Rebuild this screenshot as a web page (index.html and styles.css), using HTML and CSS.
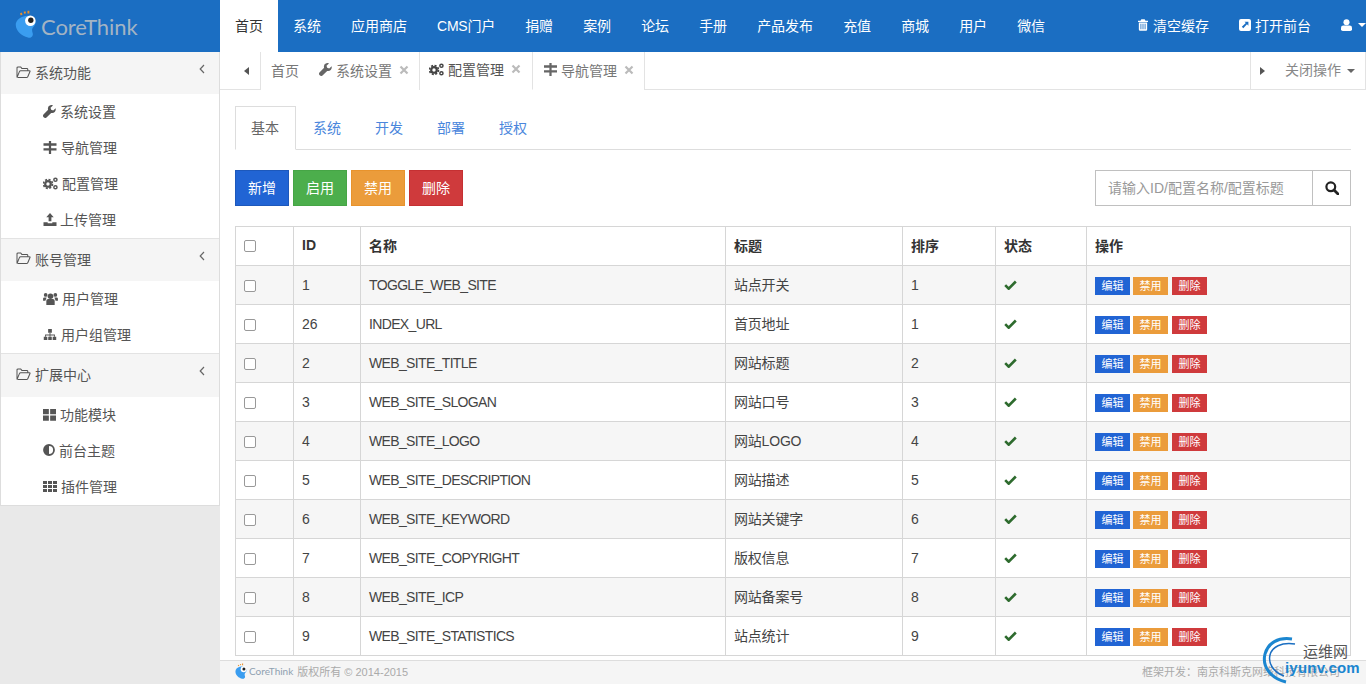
FILE: index.html
```html
<!DOCTYPE html>
<html lang="zh">
<head>
<meta charset="utf-8">
<title>CoreThink</title>
<link rel="stylesheet" href="styles.css">
</head>
<body>
<svg class="sprite" xmlns="http://www.w3.org/2000/svg">
  <symbol id="i-folder" viewBox="0 0 16 14"><path d="M1 12.5V2.2Q1 1 2.2 1H5l1.2 1.6h5.4q1 0 1 1V5M1 12.5 3.6 6q.4-1 1.400-1h9q1.400 0 1 1l-2.400 5.600q-.4.9-1.400.9H1.800" fill="none" stroke="currentColor" stroke-width="1.100"/></symbol>
  <symbol id="i-wrench" viewBox="0 0 14 14"><path d="M13.600 3.400 11 5.900 8.800 5.200 8.100 3 10.700.5C8.700-.5 6.200.6 5.500 2.600c-.3.900-.3 1.800 0 2.600L.5 10.200c-.7.700-.7 1.900 0 2.700l.6.600c.8.700 2 .7 2.700 0l5-5c2.700.9 5.700-1.400 4.800-5.100z" fill="currentColor"/></symbol>
  <symbol id="i-signs" viewBox="0 0 14 14"><path d="M5.800 0h2.400v14H5.800zM0 2.500h14V5H0zM0 7.800h14v2.400H0z" fill="currentColor"/></symbol>
  <symbol id="i-cogs" viewBox="0 0 16 14"><g fill="none" stroke="currentColor"><circle cx="5.300" cy="7.500" r="3" stroke-width="2.400"/><circle cx="5.300" cy="7.500" r="4.800" stroke-width="1.800" stroke-dasharray="2.200 1.570"/><circle cx="13.300" cy="3" r="1.700" stroke-width="1.600"/><circle cx="13.300" cy="11" r="1.700" stroke-width="1.600"/></g></symbol>
  <symbol id="i-upload" viewBox="0 0 14 14"><path d="M7 0l4 4.500H8.500V9h-3V4.500H3zM0 10h4.500v1h5v-1H14v4H0z" fill="currentColor"/></symbol>
  <symbol id="i-users" viewBox="0 0 16 14"><g fill="currentColor"><circle cx="8" cy="4.500" r="3"/><circle cx="2.800" cy="3.200" r="2"/><circle cx="13.200" cy="3.200" r="2"/><path d="M3.500 14V9.500Q3.500 7.500 5.500 7.500h5q2 0 2 2V14zM0 9.500V7q0-1.200 1.500-1.200h2.300L2.500 9.500zM16 9.500V7q0-1.200-1.500-1.200h-2.300l1.300 3.700z"/></g></symbol>
  <symbol id="i-sitemap" viewBox="0 0 14 14"><g fill="currentColor"><path d="M5 1h4v4H5zM.3 9.500h3.800V13H.3zM5.100 9.500h3.800V13H5.100zM9.900 9.500h3.800V13H9.900z"/><path d="M6.500 5h1v2h4.800v2.500h-1V8H7.500v1.500h-1V8H2.700v1.500h-1V7h4.800z"/></g></symbol>
  <symbol id="i-large" viewBox="0 0 14 14"><path d="M0 1h6.300v5.600H0zM7.700 1H14v5.600H7.700zM0 8h6.300v5.600H0zM7.700 8H14v5.600H7.700z" fill="currentColor"/></symbol>
  <symbol id="i-adjust" viewBox="0 0 12 12"><circle cx="6" cy="6" r="5" fill="none" stroke="currentColor" stroke-width="1.800"/><path d="M6 1a5 5 0 0 0 0 10z" fill="currentColor"/></symbol>
  <symbol id="i-th" viewBox="0 0 14 12"><path d="M0 .5h4v3H0zM5 .5h4v3H5zM10 .5h4v3h-4zM0 4.500h4v3H0zM5 4.500h4v3H5zM10 4.500h4v3h-4zM0 8.500h4v3H0zM5 8.500h4v3H5zM10 8.500h4v3h-4z" fill="currentColor"/></symbol>
  <symbol id="i-trash" viewBox="0 0 12 14"><path d="M4 0h4l1 2h3v1.300H0V2h3zM1 4h10v8.500Q11 14 9.500 14h-7Q1 14 1 12.500zm2 1.500v6.500h1V5.500zm2.500 0v6.500h1V5.500zm2.500 0v6.500h1V5.500z" fill="currentColor" fill-rule="evenodd"/></symbol>
  <symbol id="i-ext" viewBox="0 0 12 12"><path d="M2 0h8q2 0 2 2v8q0 2-2 2H2q-2 0-2-2V2q0-2 2-2zM5.500 2.800H9.400V6.700L8 5.300 4.300 9.200 2.800 7.700 6.800 4z" fill="currentColor" fill-rule="evenodd"/></symbol>
  <symbol id="i-user" viewBox="0 0 12 13"><circle cx="6" cy="3.500" r="3.300" fill="currentColor"/><path d="M0 11V9.500Q0 7 2.500 7h7Q12 7 12 9.500V11q0 2-2 2H2q-2 0-2-2z" fill="currentColor"/></symbol>
  <symbol id="i-search" viewBox="0 0 14 14"><circle cx="5.800" cy="5.800" r="4.400" fill="none" stroke="currentColor" stroke-width="2.200"/><path d="M9 9l4 4" stroke="currentColor" stroke-width="2.800" stroke-linecap="round"/></symbol>
  <symbol id="i-check" viewBox="0 0 13 10"><path d="M1.200 5.200 4.700 8.700 11.800 1.500" fill="none" stroke="currentColor" stroke-width="2.600"/></symbol>
  <symbol id="i-x" viewBox="0 0 10 10"><path d="M1.500 1.500l7 7M8.500 1.500l-7 7" stroke="currentColor" stroke-width="2.200"/></symbol>
  <symbol id="i-chev" viewBox="0 0 6 10"><path d="M5 1 1.200 5 5 9" fill="none" stroke="currentColor" stroke-width="1.200"/></symbol>
  <symbol id="i-mascot" viewBox="0 0 24 32"><path d="M9 6.500c5-2 10 0 12 4 1 2.500 0 5-1.500 6.500-2 2-2 4-1 7 .8 3-2 5.500-5 4.500C7 27 1 22 .8 15.500.7 11 4 8 9 6.500z" fill="#3a9df0"/><circle cx="16" cy="11" r="5.500" fill="#fff"/><circle cx="16.500" cy="10.500" r="2.800" fill="#222"/><path d="M7 5 6 3M10.500 3.500 10 1.500M14 3.500V0.500" stroke="#e8912d" stroke-width="2"/></symbol>
</svg>

<div class="app">
  <header class="topbar">
    <a class="brand">
      <svg class="mascot"><use href="#i-mascot"/></svg>
      <span class="brand-name">CoreThink</span>
    </a>
    <nav class="topnav">
      <a class="nav-item is-active">首页</a>
      <a class="nav-item">系统</a>
      <a class="nav-item">应用商店</a>
      <a class="nav-item nav-cms">CMS门户</a>
      <a class="nav-item">捐赠</a>
      <a class="nav-item">案例</a>
      <a class="nav-item">论坛</a>
      <a class="nav-item">手册</a>
      <a class="nav-item">产品发布</a>
      <a class="nav-item">充值</a>
      <a class="nav-item">商城</a>
      <a class="nav-item">用户</a>
      <a class="nav-item">微信</a>
    </nav>
    <div class="topright">
      <a class="top-link"><svg class="ic ic-trash"><use href="#i-trash"/></svg>清空缓存</a>
      <a class="top-link"><svg class="ic ic-ext"><use href="#i-ext"/></svg>打开前台</a>
      <a class="top-user"><svg class="ic ic-top-user"><use href="#i-user"/></svg><span class="caret caret-white"></span></a>
    </div>
  </header>

  <div class="body">
    <aside class="side">
      <div class="side-panel">
        <div class="side-head"><svg class="ic ic-folder"><use href="#i-folder"/></svg><span class="side-title">系统功能</span><svg class="ic-chev"><use href="#i-chev"/></svg></div>
        <a class="side-item"><svg class="ic si"><use href="#i-wrench"/></svg>系统设置</a>
        <a class="side-item"><svg class="ic si si-14"><use href="#i-signs"/></svg>导航管理</a>
        <a class="side-item"><svg class="ic si si-w"><use href="#i-cogs"/></svg>配置管理</a>
        <a class="side-item"><svg class="ic si si-up"><use href="#i-upload"/></svg>上传管理</a>
        <div class="side-head side-head-next"><svg class="ic ic-folder"><use href="#i-folder"/></svg><span class="side-title">账号管理</span><svg class="ic-chev"><use href="#i-chev"/></svg></div>
        <a class="side-item"><svg class="ic si si-w"><use href="#i-users"/></svg>用户管理</a>
        <a class="side-item"><svg class="ic si si-14"><use href="#i-sitemap"/></svg>用户组管理</a>
        <div class="side-head side-head-next side-head-last"><svg class="ic ic-folder"><use href="#i-folder"/></svg><span class="side-title">扩展中心</span><svg class="ic-chev"><use href="#i-chev"/></svg></div>
        <a class="side-item"><svg class="ic si"><use href="#i-large"/></svg>功能模块</a>
        <a class="side-item"><svg class="ic si si-n"><use href="#i-adjust"/></svg>前台主题</a>
        <a class="side-item"><svg class="ic si si-14"><use href="#i-th"/></svg>插件管理</a>
      </div>
    </aside>

    <main class="main">
      <div class="tabstrip">
        <div class="strip-arrow"><span class="tri tri-left"></span></div>
        <div class="strip-tab strip-home">首页</div>
        <div class="strip-tab strip-first"><svg class="ic st-ic"><use href="#i-wrench"/></svg>系统设置<svg class="st-x"><use href="#i-x"/></svg></div>
        <div class="strip-tab is-current"><svg class="ic st-ic st-ic-w"><use href="#i-cogs"/></svg>配置管理<svg class="st-x"><use href="#i-x"/></svg></div>
        <div class="strip-tab strip-third"><svg class="ic st-ic"><use href="#i-signs"/></svg>导航管理<svg class="st-x"><use href="#i-x"/></svg></div>
        <div class="strip-right"><span class="tri tri-right"></span><span class="close-ops">关闭操作</span><span class="caret caret-grey"></span></div>
      </div>

      <div class="content">
        <ul class="tabs">
          <li class="tab is-on">基本</li>
          <li class="tab">系统</li>
          <li class="tab">开发</li>
          <li class="tab">部署</li>
          <li class="tab">授权</li>
        </ul>

        <div class="toolbar">
          <div class="btns">
            <button class="btn btn-blue">新增</button>
            <button class="btn btn-green">启用</button>
            <button class="btn btn-orange">禁用</button>
            <button class="btn btn-red">删除</button>
          </div>
          <div class="search">
            <span class="search-input">请输入ID/配置名称/配置标题</span>
            <span class="search-btn"><svg class="ic-search"><use href="#i-search"/></svg></span>
          </div>
        </div>

        <table class="grid">
          <thead>
            <tr><th class="c-check"><span class="cb"></span></th><th class="c-id">ID</th><th class="c-name">名称</th><th class="c-title">标题</th><th class="c-sort">排序</th><th class="c-state">状态</th><th>操作</th></tr>
          </thead>
          <tbody>
            <tr><td><span class="cb"></span></td><td>1</td><td>TOGGLE_WEB_SITE</td><td>站点开关</td><td>1</td><td><svg class="ic-check"><use href="#i-check"/></svg></td><td><span class="lb lb-blue">编辑</span><span class="lb lb-orange">禁用</span><span class="lb lb-red">删除</span></td></tr>
            <tr><td><span class="cb"></span></td><td>26</td><td>INDEX_URL</td><td>首页地址</td><td>1</td><td><svg class="ic-check"><use href="#i-check"/></svg></td><td><span class="lb lb-blue">编辑</span><span class="lb lb-orange">禁用</span><span class="lb lb-red">删除</span></td></tr>
            <tr><td><span class="cb"></span></td><td>2</td><td>WEB_SITE_TITLE</td><td>网站标题</td><td>2</td><td><svg class="ic-check"><use href="#i-check"/></svg></td><td><span class="lb lb-blue">编辑</span><span class="lb lb-orange">禁用</span><span class="lb lb-red">删除</span></td></tr>
            <tr><td><span class="cb"></span></td><td>3</td><td>WEB_SITE_SLOGAN</td><td>网站口号</td><td>3</td><td><svg class="ic-check"><use href="#i-check"/></svg></td><td><span class="lb lb-blue">编辑</span><span class="lb lb-orange">禁用</span><span class="lb lb-red">删除</span></td></tr>
            <tr><td><span class="cb"></span></td><td>4</td><td>WEB_SITE_LOGO</td><td>网站LOGO</td><td>4</td><td><svg class="ic-check"><use href="#i-check"/></svg></td><td><span class="lb lb-blue">编辑</span><span class="lb lb-orange">禁用</span><span class="lb lb-red">删除</span></td></tr>
            <tr><td><span class="cb"></span></td><td>5</td><td>WEB_SITE_DESCRIPTION</td><td>网站描述</td><td>5</td><td><svg class="ic-check"><use href="#i-check"/></svg></td><td><span class="lb lb-blue">编辑</span><span class="lb lb-orange">禁用</span><span class="lb lb-red">删除</span></td></tr>
            <tr><td><span class="cb"></span></td><td>6</td><td>WEB_SITE_KEYWORD</td><td>网站关键字</td><td>6</td><td><svg class="ic-check"><use href="#i-check"/></svg></td><td><span class="lb lb-blue">编辑</span><span class="lb lb-orange">禁用</span><span class="lb lb-red">删除</span></td></tr>
            <tr><td><span class="cb"></span></td><td>7</td><td>WEB_SITE_COPYRIGHT</td><td>版权信息</td><td>7</td><td><svg class="ic-check"><use href="#i-check"/></svg></td><td><span class="lb lb-blue">编辑</span><span class="lb lb-orange">禁用</span><span class="lb lb-red">删除</span></td></tr>
            <tr><td><span class="cb"></span></td><td>8</td><td>WEB_SITE_ICP</td><td>网站备案号</td><td>8</td><td><svg class="ic-check"><use href="#i-check"/></svg></td><td><span class="lb lb-blue">编辑</span><span class="lb lb-orange">禁用</span><span class="lb lb-red">删除</span></td></tr>
            <tr><td><span class="cb"></span></td><td>9</td><td>WEB_SITE_STATISTICS</td><td>站点统计</td><td>9</td><td><svg class="ic-check"><use href="#i-check"/></svg></td><td><span class="lb lb-blue">编辑</span><span class="lb lb-orange">禁用</span><span class="lb lb-red">删除</span></td></tr>
          </tbody>
        </table>
      </div>

      <footer class="foot">
        <div class="foot-left"><svg class="foot-mascot"><use href="#i-mascot"/></svg><span class="foot-brand">CoreThink</span><span>版权所有 © 2014-2015</span></div>
        <div class="foot-right">框架开发：南京科斯克网络科技有限公司</div>
      </footer>
    </main>
  </div>
</div>

<div class="watermark">
  <svg class="wm-arc" viewBox="0 0 44 48"><path d="M24 46C8 42 0 30 3 18 6 7 16 1 30 3" fill="none" stroke="#1b86d0" stroke-width="3"/><path d="M22 40C11 36 6 27 8 19 10 11 19 6 33 8" fill="none" stroke="#1b6fc2" stroke-width="1.500"/></svg>
  <span class="wm-cn">运维网</span>
  <span class="wm-en">iyunv.com</span>
</div>
</body>
</html>
```

FILE: styles.css
```css
* { box-sizing: border-box; }
html, body { margin: 0; height: 100%; overflow: hidden; }
body {
  font-family: "Liberation Sans", "Noto Sans CJK SC", sans-serif;
  font-size: 14px;
  color: #444;
  background: #fff;
  position: relative;
}
.sprite { display: none; }
.ic { display: inline-block; flex: none; }

.app { display: flex; flex-direction: column; height: 684px; }

/* top bar */
.topbar { display: flex; height: 52px; flex: none; background: #1b6ec2; color: #fff; }
.brand { width: 220px; flex: none; display: flex; align-items: center; padding-left: 15px; }
.mascot { width: 23px; height: 33px; margin-top: -2px; }
.brand-name { font-family: "Lato", sans-serif; font-size: 22px; color: #a3b4c4; margin-left: 3px; letter-spacing: -.1px; }
.topnav { display: flex; }
.nav-item { height: 52px; line-height: 52px; padding: 0 15px; color: #fff; white-space: nowrap; flex: none; }
.nav-cms { letter-spacing: -.2px; }
.nav-item.is-active { background: #fff; color: #333; }
.topright { margin-left: auto; display: flex; align-items: center; height: 52px; }
.top-link { display: flex; align-items: center; margin-right: 30px; padding-bottom: 2px; white-space: nowrap; }
.ic-trash { width: 10px; height: 12px; margin-right: 5px; color: #fff; }
.ic-ext { width: 12px; height: 12px; margin-right: 4px; color: #fff; }
.top-user { display: flex; align-items: center; width: 25px; padding-bottom: 2px; }
.ic-top-user { width: 11px; height: 12px; margin-right: 6px; color: #fff; }
.caret { display: inline-block; width: 0; height: 0; border-left: 4px solid transparent; border-right: 4px solid transparent; border-top: 4px solid #fff; }
.caret-grey { border-top-color: #666; margin-left: 6px; }

/* body */
.body { display: flex; flex: 1; min-height: 0; }
.side { width: 220px; flex: none; background: #e9e9e9; }
.side-panel { background: #fff; border: 1px solid #ddd; border-top: 0; }
.side-head { height: 42px; background: #f5f5f5; display: flex; align-items: center; padding: 0 0 2px 15px; color: #555; position: relative; }
.side-head-next { height: 43px; border-top: 1px solid #e3e3e3; padding-bottom: 3px; }
.side-head-last { height: 44px; }
.ic-folder { width: 15px; height: 13px; margin-right: 4px; color: #555; }
.side-title { color: #555; }
.ic-chev { position: absolute; right: 14px; top: 12px; width: 6px; height: 10px; color: #666; }
.side-item { display: flex; align-items: center; height: 36px; padding: 0 0 2px 42px; color: #555; }
.si { width: 13px; height: 13px; margin-right: 4px; color: #555; }
.si-14 { width: 14px; }
.si-up { margin-right: 3px; width: 14px; }
.si-w { width: 15px; margin-right: 4px; }
.si-n { width: 12px; height: 12px; margin-right: 4px; }

/* main */
.main { flex: 1; min-width: 0; display: flex; flex-direction: column; }
.tabstrip { display: flex; height: 38px; flex: none; border-bottom: 1px solid #e3e3e3; color: #777; }
.strip-arrow { width: 41px; flex: none; display: flex; align-items: center; justify-content: flex-end; padding-right: 11px; border-right: 1px solid #e3e3e3; }
.tri { display: inline-block; width: 0; height: 0; border-top: 4px solid transparent; border-bottom: 4px solid transparent; }
.tri-left { border-right: 5px solid #555; }
.tri-right { border-left: 5px solid #555; }
.strip-tab { display: flex; align-items: center; padding: 0 11px 3px 9px; height: 38px; white-space: nowrap; border-right: 1px solid #e3e3e3; background: #fff; }
.strip-home { border-right: 0; padding-right: 0; padding-left: 10px; }
.strip-first { padding-left: 20px; padding-right: 10px; }
.strip-third { padding-left: 11px; padding-right: 10px; }
.strip-tab.is-current { height: 38px; color: #555; border-bottom: 1px solid #fff; }
.st-ic { width: 13px; height: 13px; margin-right: 4px; color: #666; }
.st-ic-w { width: 15px; margin-right: 4px; color: #444; }
.st-x { width: 10px; height: 10px; margin-left: 7px; color: #bbb; }
.strip-right { margin-left: auto; width: 116px; flex: none; display: flex; align-items: center; padding-left: 9px; border-left: 1px solid #e3e3e3; border-right: 1px solid #e3e3e3; }
.close-ops { margin-left: 20px; padding-bottom: 3px; color: #888; }

/* content */
.content { flex: 1; min-height: 0; padding: 16px 15px 0; overflow: hidden; }
.tabs { list-style: none; display: flex; margin: 0; padding: 0; height: 44px; border-bottom: 1px solid #ddd; }
.tab { width: 62px; padding: 0 0 0 17px; line-height: 45px; color: #4a86dc; height: 44px; }
.tab.is-on { width: 61px; padding-left: 15px; color: #666; background: #fff; border: 1px solid #ddd; border-bottom-color: #fff; line-height: 42px; }
.tab:nth-child(2) { padding-left: 17px; }

.toolbar { display: flex; justify-content: space-between; margin-top: 20px; }
.btns { display: flex; gap: 4px; }
.btn { width: 54px; height: 36px; padding: 0 0 2px; border: 1px solid; color: #fff; font: inherit; border-radius: 0; }
.btn-blue { background: #2164d4; border-color: #1d58bb; }
.btn-green { background: #4cae4c; border-color: #46a546; }
.btn-orange { background: #eb9c3b; border-color: #e8932c; }
.btn-red { background: #cf3a3c; border-color: #c53032; }
.search { display: flex; width: 256px; height: 36px; border: 1px solid #c0c0c0; }
.search-input { width: 216px; flex: none; line-height: 34px; padding-left: 12px; color: #999; white-space: nowrap; overflow: hidden; }
.search-btn { flex: 1; border-left: 1px solid #c0c0c0; display: flex; align-items: center; justify-content: center; color: #222; }
.ic-search { width: 14px; height: 14px; }

.grid { border-collapse: collapse; table-layout: fixed; width: 1116px; margin-top: 20px; border: 1px solid #d6d6d6; }
.grid th, .grid td { border: 1px solid #d6d6d6; padding: 0 8px; text-align: left; vertical-align: middle; white-space: nowrap; }
.grid th { height: 39px; padding-bottom: 2px; color: #333; font-weight: 700; }
.grid th:first-child { padding-bottom: 0; }
.grid td { height: 39px; color: #444; }
.grid td:nth-child(1), .grid td:nth-child(7) { padding-top: 2px; }
.grid td:nth-child(3) { letter-spacing: -.65px; }
.grid td:nth-child(4) { padding-bottom: 2px; letter-spacing: -.2px; }
.grid tbody tr:nth-child(odd) { background: #f6f6f6; }
.c-check { width: 58px; }
.c-id { width: 67px; }
.c-name { width: 365px; }
.c-title { width: 177px; }
.c-sort { width: 93px; }
.c-state { width: 91px; }
.cb { display: block; width: 12px; height: 12px; border: 1px solid #999; border-radius: 2px; background: #fff; }
.ic-check { display: block; width: 13px; height: 10px; color: #2e6b2e; }
.lb { display: inline-block; width: 35px; height: 18px; line-height: 18px; margin-right: 3px; text-align: center; color: #fff; font-size: 11px; vertical-align: middle; }
.lb-blue { background: #2164d4; }
.lb-orange { background: #eb9c3b; }
.lb-red { background: #cf3a3c; margin-right: 0; margin-left: 1px; }

/* footer */
.foot { height: 24px; flex: none; display: flex; justify-content: space-between; align-items: center; padding: 0 26px 3px 15px; background: #f5f5f5; border-top: 1px solid #ddd; font-size: 11px; color: #aaa; }
.foot-left { display: flex; align-items: center; }
.foot-mascot { width: 13px; height: 18px; margin-top: 1px; }
.foot-brand { font-family: "Lato", sans-serif; font-size: 10px; color: #8fa0b0; margin: 0 4px 0 1px; }

/* watermark */
.watermark { position: absolute; left: 1262px; top: 636px; width: 104px; height: 48px; }
.wm-arc { position: absolute; left: 0; top: 0; width: 44px; height: 48px; }
.wm-cn { position: absolute; left: 41px; top: 4px; font-size: 15px; color: #555; }
.wm-en { position: absolute; left: 23px; top: 23px; font-size: 15px; font-weight: 700; color: #1b86d0; white-space: nowrap; letter-spacing: .2px; }
```
